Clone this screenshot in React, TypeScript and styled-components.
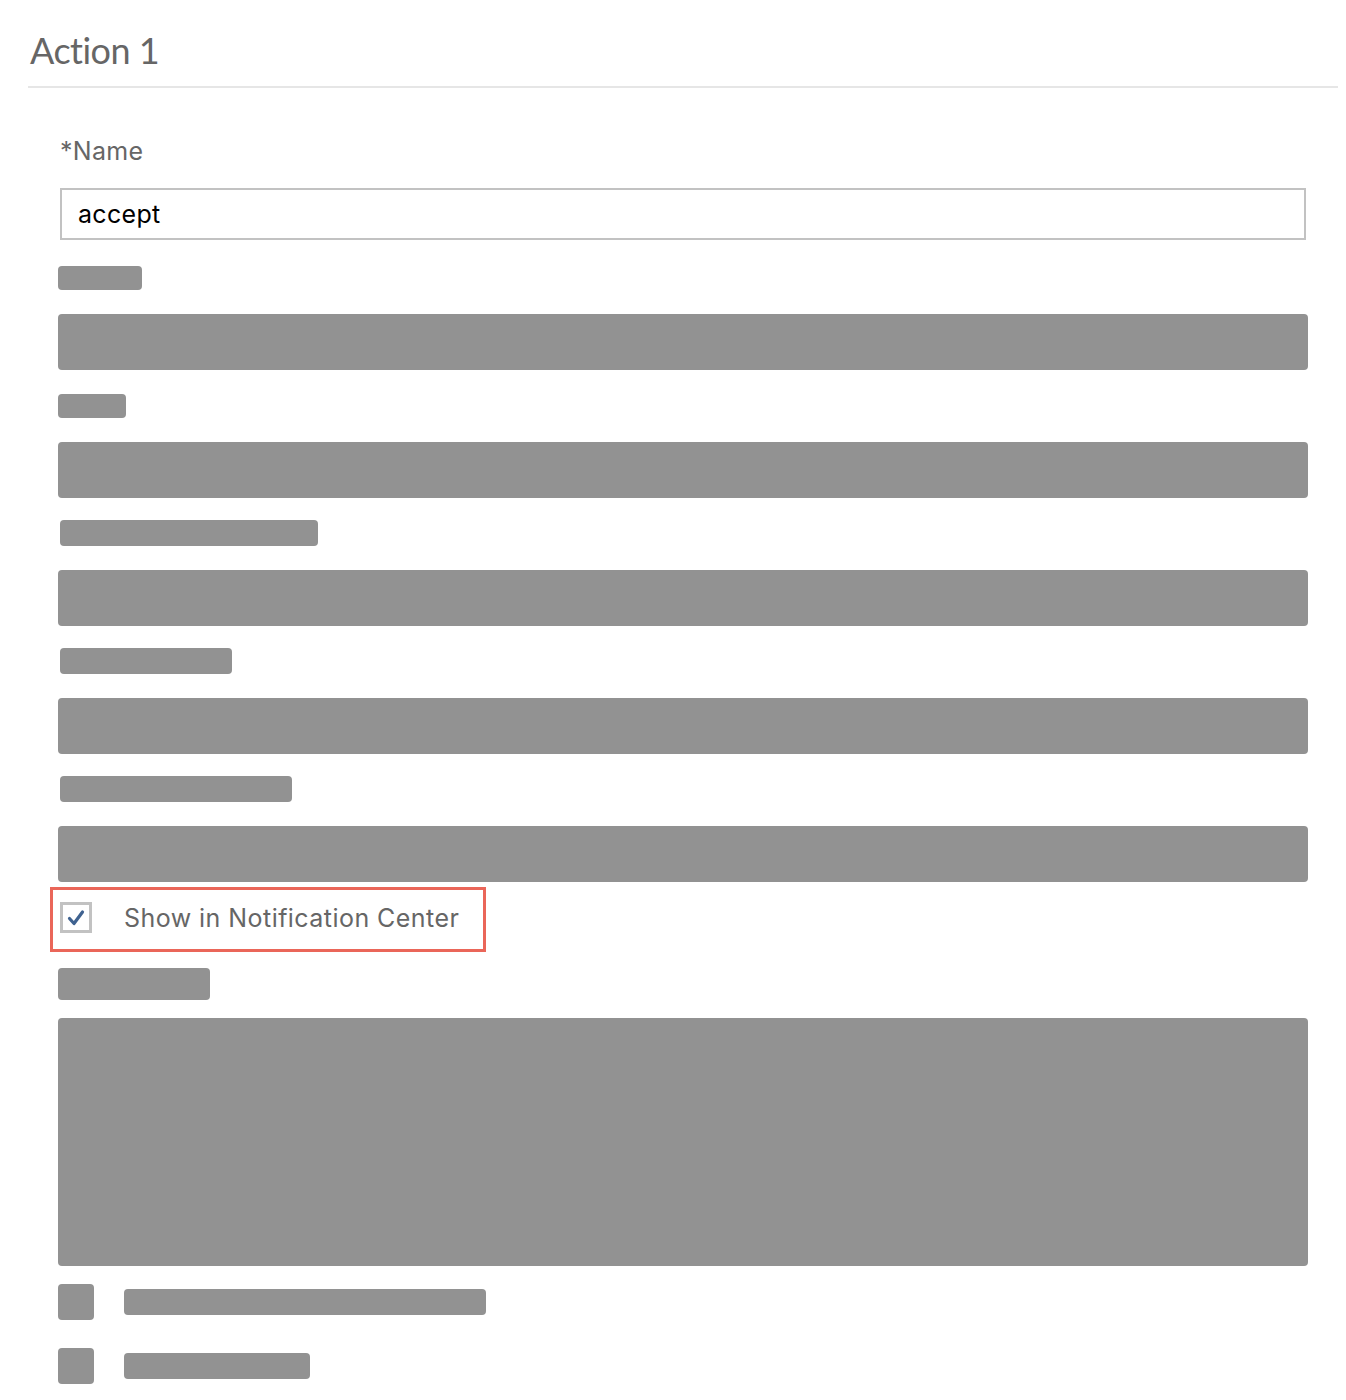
import React from "react";
import styled, { createGlobalStyle } from "styled-components";

const Global = createGlobalStyle`
  html, body { margin: 0; padding: 0; background: #ffffff; }
  body { font-family: Inter, "Liberation Sans", Arial, sans-serif; }
  * { box-sizing: border-box; }
`;

const Page = styled.div`
  padding: 0 8px 40px 28px;
`;

const Header = styled.header`
  padding: 28px 0 14px 2px;
  border-bottom: 2px solid #e6e6e6;
`;

const Title = styled.h1`
  margin: 0;
  font-family: Lato, "Open Sans", sans-serif;
  font-weight: 400;
  font-size: 36px;
  line-height: 44px;
  letter-spacing: -0.5px;
  color: #666666;
`;

const Form = styled.div`
  display: flex;
  flex-direction: column;
  align-items: flex-start;
  padding: 48px 30px 0;
`;

const FieldLabel = styled.label`
  margin-left: 2px;
  font-size: 25px;
  line-height: 30px;
  letter-spacing: 0.3px;
  color: #666666;
`;

const TextInput = styled.input`
  margin: 22px 2px 0;
  align-self: stretch;
  height: 52px;
  border: 2px solid #c2c2c2;
  padding: 0 16px;
  font-family: Inter, "Liberation Sans", Arial, sans-serif;
  font-size: 25px;
  letter-spacing: 0.3px;
  color: #000000;
  background: #fff;
  outline: none;
`;

const Skel = styled.div<{ $w?: number; $h: number; $mt: number; $ml?: number }>`
  background: #929292;
  border-radius: 4px;
  width: ${(p) => (p.$w ? `${p.$w}px` : "auto")};
  align-self: ${(p) => (p.$w ? "flex-start" : "stretch")};
  height: ${(p) => p.$h}px;
  margin-top: ${(p) => p.$mt}px;
  margin-left: ${(p) => p.$ml ?? 0}px;
  flex-shrink: 0;
`;

const HighlightRow = styled.label`
  display: flex;
  align-items: flex-start;
  gap: 32px;
  width: 436px;
  height: 65px;
  margin: 5px 0 0 -8px;
  padding: 12px 0 0 7px;
  border: 3px solid #ea6659;
  cursor: pointer;
`;

const CheckBox = styled.span`
  display: flex;
  align-items: center;
  justify-content: center;
  width: 32px;
  height: 31px;
  border: 3px solid #c2c2c2;
  background: #fff;
  flex-shrink: 0;
`;

const CheckText = styled.span`
  font-size: 25px;
  line-height: 32px;
  letter-spacing: 0.45px;
  color: #666666;
  white-space: nowrap;
`;

const ListRow = styled.div<{ $mt: number }>`
  display: flex;
  align-items: center;
  gap: 30px;
  margin-top: ${(p) => p.$mt}px;
`;

const Square = styled.div`
  width: 36px;
  height: 36px;
  border-radius: 4px;
  background: #929292;
`;

const RowBar = styled.div<{ $w: number }>`
  width: ${(p) => p.$w}px;
  height: 26px;
  border-radius: 4px;
  background: #929292;
`;

export default function App() {
  return (
    <>
      <Global />
      <Page>
        <Header>
          <Title>Action 1</Title>
        </Header>
        <Form>
          <FieldLabel>*Name</FieldLabel>
          <TextInput defaultValue="accept" />

          <Skel $w={84} $h={24} $mt={26} />
          <Skel $h={56} $mt={24} />
          <Skel $w={68} $h={24} $mt={24} />
          <Skel $h={56} $mt={24} />
          <Skel $w={258} $h={26} $mt={22} $ml={2} />
          <Skel $h={56} $mt={24} />
          <Skel $w={172} $h={26} $mt={22} $ml={2} />
          <Skel $h={56} $mt={24} />
          <Skel $w={232} $h={26} $mt={22} $ml={2} />
          <Skel $h={56} $mt={24} />

          <HighlightRow>
            <CheckBox>
              <svg width="20" height="18" viewBox="0 0 20 18" fill="none">
                <path
                  d="M3.5 9.5 L8 14.5 L16.5 3"
                  stroke="#3f6290"
                  strokeWidth="3.2"
                  strokeLinecap="round"
                  strokeLinejoin="round"
                />
              </svg>
            </CheckBox>
            <CheckText>Show in Notification Center</CheckText>
          </HighlightRow>

          <Skel $w={152} $h={32} $mt={16} />
          <Skel $h={248} $mt={18} />

          <ListRow $mt={18}>
            <Square />
            <RowBar $w={362} />
          </ListRow>
          <ListRow $mt={28}>
            <Square />
            <RowBar $w={186} />
          </ListRow>
        </Form>
      </Page>
    </>
  );
}
